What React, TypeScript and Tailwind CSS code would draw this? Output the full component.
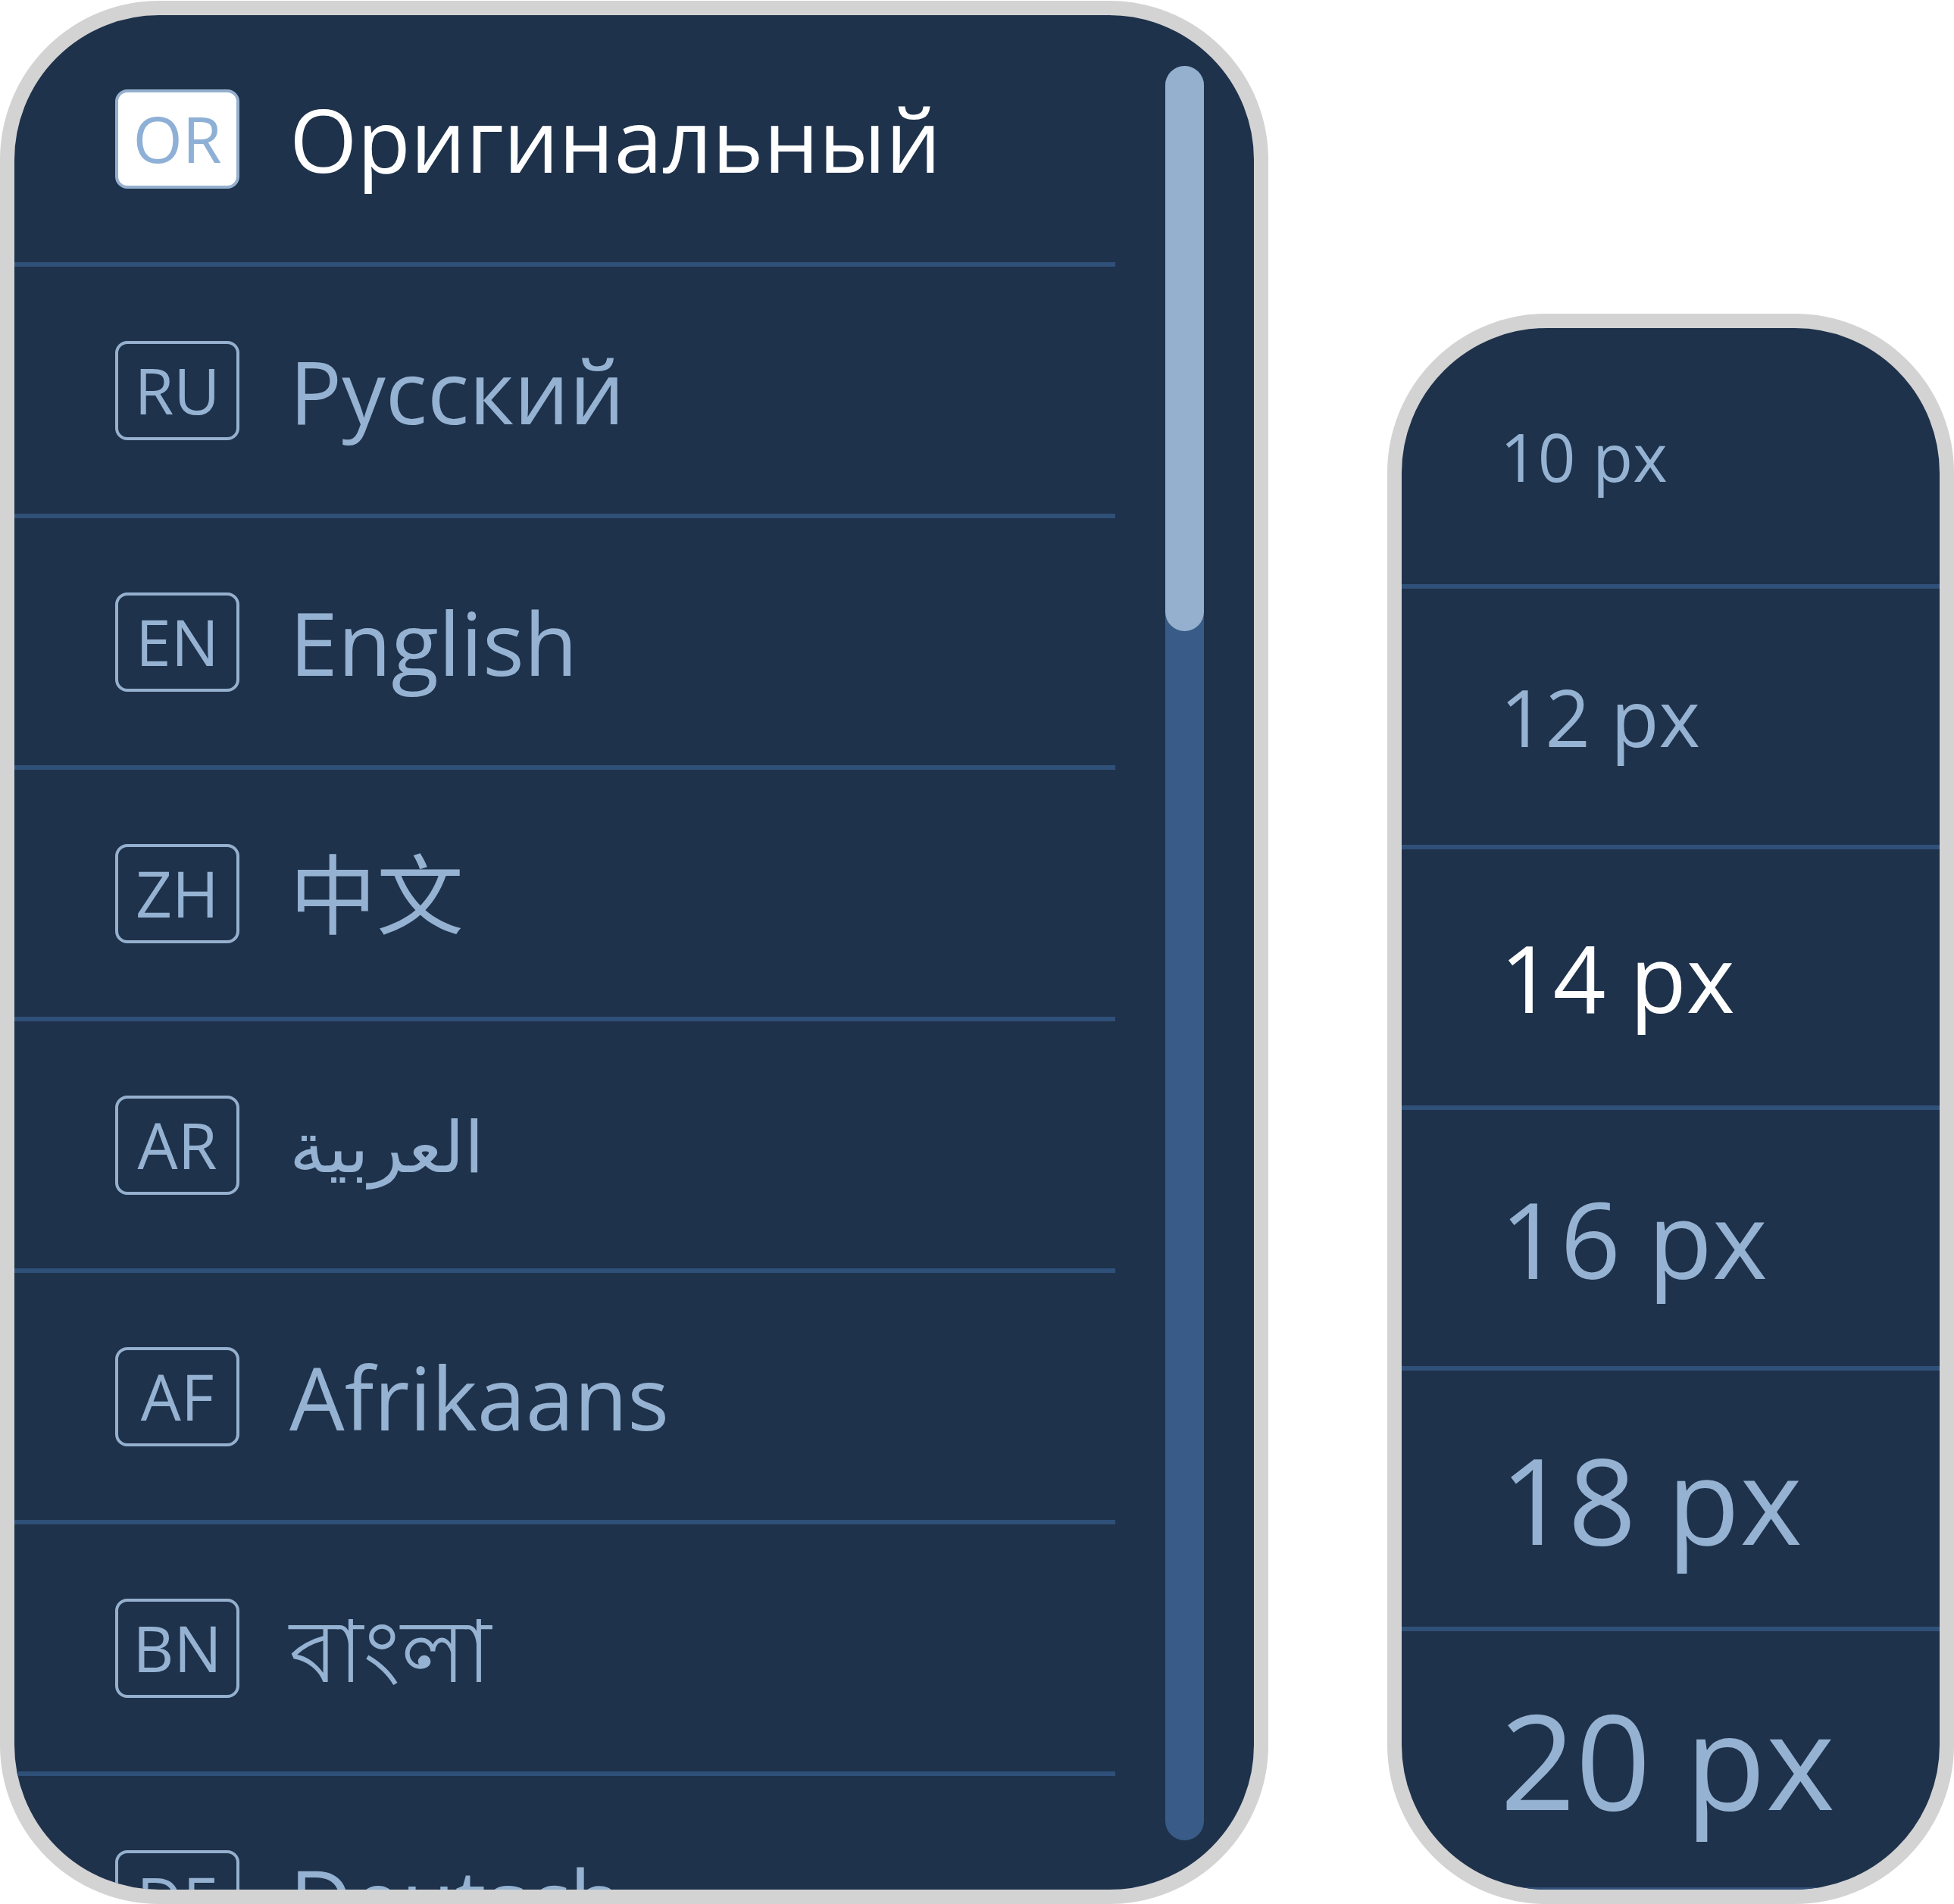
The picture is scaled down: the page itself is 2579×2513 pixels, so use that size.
const languages = [
  { code: 'OR', name: 'Оригинальный', active: true },
  { code: 'RU', name: 'Русский' },
  { code: 'EN', name: 'English' },
  { code: 'ZH', name: '中文' },
  { code: 'AR', name: 'العربية', small: true },
  { code: 'AF', name: 'Afrikaans' },
  { code: 'BN', name: 'বাংলা' },
  { code: 'DE', name: 'Deutsch' },
];

const sizes = [10, 12, 14, 16, 18, 20];

// font size per option, the list is shown at a large zoom
const sizeClass: Record<number, string> = {
  10: 'text-[87px]',
  12: 'text-[104px]',
  14: 'text-[122px]',
  16: 'text-[139px]',
  18: 'text-[157px]',
  20: 'text-[174px]',
};

function LanguageRow({
  code,
  name,
  active,
  small,
}: {
  code: string;
  name: string;
  active?: boolean;
  small?: boolean;
}) {
  return (
    <div className="flex items-center h-[332px] shrink-0 border-b-[6px] border-[#2f5079] pl-[133px]">
      <div
        className={`flex items-center justify-center w-[164px] h-[131px] shrink-0 border-[4px] border-[#95b0ce] rounded-[16px] text-[84px] leading-none ${
          active ? 'bg-white text-[#8fb0d6]' : 'text-[#95b2d2]'
        }`}
      >
        {code}
      </div>
      <span
        className={`ml-[66px] leading-none whitespace-nowrap ${small ? 'text-[94px]' : 'text-[115px]'} ${
          active ? 'text-white' : 'text-[#95b2d2]'
        }`}
      >
        {name}
      </span>
    </div>
  );
}

export default function App() {
  return (
    <div className="flex items-end justify-between w-[2579px] h-[2513px] bg-white font-['Open_Sans','Noto_Sans_CJK_SC','DejaVu_Sans',sans-serif]">
      {/* language list */}
      <div className="flex w-[1674px] h-[2512px] border-[19px] border-[#d3d3d3] rounded-[210px] bg-[#1f324b] overflow-hidden">
        <div className="flex flex-col w-[1453px] shrink-0">
          {languages.map((l) => (
            <LanguageRow key={l.code} {...l} />
          ))}
        </div>
        <div className="flex justify-center w-[183px] shrink-0 pt-[67px] pb-[65px]">
          <div className="flex flex-col w-[51px] rounded-full bg-[#385c87]">
            <div className="h-[746px] rounded-full bg-[#95b0ce]" />
          </div>
        </div>
      </div>

      {/* font size list */}
      <div className="flex flex-col w-[748px] h-[2099px] border-[19px] border-[#d3d3d3] rounded-[210px] bg-[#1f324b] overflow-hidden">
        {sizes.map((s) => (
          <div
            key={s}
            className="flex items-center h-[344px] shrink-0 border-b-[6px] border-[#2f5079] pl-[130px]"
          >
            <span
              className={`${sizeClass[s]} leading-none whitespace-nowrap ${
                s === 14 ? 'text-white' : 'text-[#95b2d2]'
              }`}
            >
              {s} px
            </span>
          </div>
        ))}
      </div>
    </div>
  );
}
